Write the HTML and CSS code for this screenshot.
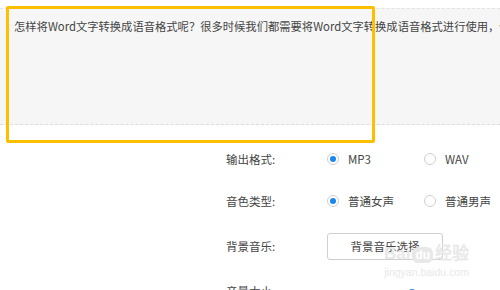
FILE: index.html
```html
<!DOCTYPE html>
<html lang="zh-CN">
<head>
    <meta charset="UTF-8">
    <meta name="viewport" content="width=device-width, initial-scale=1.0">
    <title>Word转语音</title>
    <link rel="stylesheet" href="styles.css">
</head>
<body>
    <div class="page">
        <!-- 文本输入区 -->
        <div class="editor">
            <p class="editor-text">怎样将Word文字转换成语音格式呢？很多时候我们都需要将Word文字转换成语音格式进行使用，但是很多人都不知道该如何操作。</p>
        </div>

        <!-- 标注框 -->
        <div class="highlight"></div>

        <!-- 设置项 -->
        <div class="settings">
            <div class="row">
                <span class="label">输出格式:</span>
                <label class="option"><span class="radio checked"></span>MP3</label>
                <label class="option"><span class="radio"></span>WAV</label>
            </div>
            <div class="row">
                <span class="label">音色类型:</span>
                <label class="option"><span class="radio checked"></span>普通女声</label>
                <label class="option"><span class="radio"></span>普通男声</label>
            </div>
            <div class="row row-tall">
                <span class="label">背景音乐:</span>
                <button class="music-btn">背景音乐选择</button>
            </div>
            <div class="row">
                <span class="label">音量大小:</span>
                <div class="slider"><span class="thumb"></span></div>
            </div>
        </div>

        <!-- 水印 -->
        <div class="watermark">
            <span class="wm-logo">Bai<span class="wm-du">du</span>经验</span>
            <span class="wm-url">jingyan.baidu.com</span>
        </div>
    </div>
</body>
</html>
```

FILE: styles.css
```css
body {
    margin: 0;
    font-family: "Noto Sans CJK SC", "Noto Sans", sans-serif;
    font-size: 11.5px;
    color: #444;
    background-color: #fff;
    overflow: hidden;
}

.page {
    position: relative;
    width: 500px;
    height: 290px;
    overflow: hidden;
}

.editor {
    margin-top: 8px;
    height: 117px;
    box-sizing: border-box;
    background-color: #f6f6f6;
    border-top: 1px dashed #e2e2e2;
    border-bottom: 1px dashed #dcdcdc;
    padding: 9px 14px;
    overflow: hidden;
}

.editor-text {
    margin: 0;
    font-size: 11.3px;
    line-height: 16px;
    white-space: nowrap;
    color: #444;
}

.highlight {
    position: absolute;
    left: 6px;
    top: 6px;
    width: 369px;
    height: 137px;
    box-sizing: border-box;
    border: 3px solid #fdbf00;
    border-radius: 2px;
}

.settings {
    padding: 13px 0 0 226px;
}

.row {
    display: grid;
    grid-template-columns: 101px 97px auto;
    align-items: center;
    height: 42px;
}

.row-tall {
    height: 48px;
}

.label {
    color: #444;
}

.option {
    display: flex;
    align-items: center;
    gap: 9px;
    color: #444;
}

.radio {
    width: 12px;
    height: 12px;
    box-sizing: border-box;
    border: 1px solid #cfcfcf;
    border-radius: 50%;
    display: flex;
    align-items: center;
    justify-content: center;
    background-color: #fff;
}

.radio.checked::after {
    content: "";
    width: 6px;
    height: 6px;
    border-radius: 50%;
    background-color: #1a86f0;
}

.music-btn {
    width: 116px;
    height: 27px;
    border: 1px solid #cfcfcf;
    border-radius: 3px;
    background-color: #fff;
    font-family: inherit;
    font-size: 11.5px;
    color: #444;
    padding: 0;
    grid-column: 2 / 4;
}

.slider {
    grid-column: 2 / 4;
    padding-left: 80px;
}

.thumb {
    display: block;
    width: 10px;
    height: 10px;
    margin-top: 6px;
    border-radius: 50%;
    background-color: #2b8cf0;
}

.watermark {
    position: absolute;
    left: 384px;
    top: 243px;
    display: flex;
    flex-direction: column;
    align-items: center;
    color: #e8e8e8;
    pointer-events: none;
}

.wm-logo {
    font-family: "Liberation Sans", sans-serif;
    font-size: 17px;
    font-weight: bold;
    line-height: 22px;
}

.wm-du {
    display: inline-block;
    background-color: #e8e8e8;
    color: #fff;
    border-radius: 6px;
    font-size: 12px;
    line-height: 16px;
    padding: 0 3px;
    margin: 0 2px;
}

.wm-url {
    font-family: "Liberation Sans", sans-serif;
    font-size: 10.5px;
    line-height: 14px;
}
```
